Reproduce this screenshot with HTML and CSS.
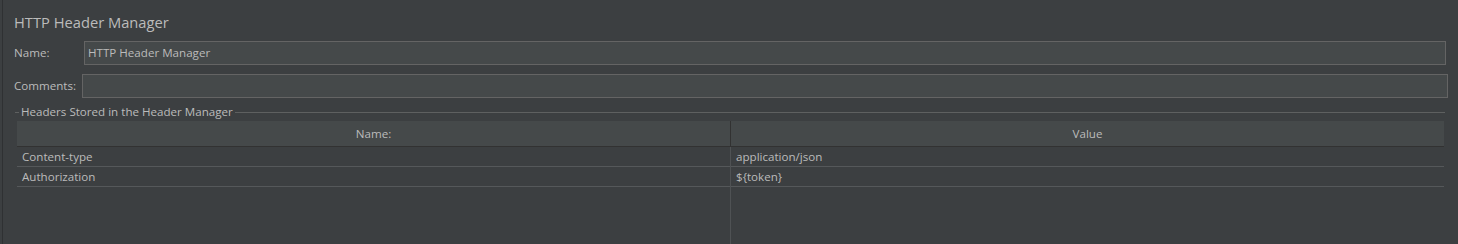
FILE: index.html
```html
<!DOCTYPE html>
<html>
<head>
<meta charset="utf-8">
<link rel="stylesheet" href="styles.css">
</head>
<body>
<div class="panel">
  <div class="title">HTTP Header Manager</div>
  <div class="field field-name">
    <label class="label label-name">Name:</label>
    <div class="input">HTTP Header Manager</div>
  </div>
  <div class="field field-comments">
    <label class="label label-comments">Comments:</label>
    <div class="input"></div>
  </div>
  <div class="group">
    <div class="group-title"><span class="dash"></span><span class="group-text">Headers Stored in the Header Manager</span><span class="group-line"></span></div>
    <div class="table">
      <div class="thead">
        <div class="th th-name">Name:</div>
        <div class="th th-value">Value</div>
      </div>
      <div class="tbody">
        <div class="col col-name">
          <div class="td">Content-type</div>
          <div class="td">Authorization</div>
        </div>
        <div class="col col-value">
          <div class="td">application/json</div>
          <div class="td">${token}</div>
        </div>
      </div>
    </div>
  </div>
</div>
</body>
</html>
```
FILE: styles.css
```css
html, body {
  margin: 0;
  padding: 0;
  background: #3c3f41;
  height: 244px;
  overflow: hidden;
}
body {
  font-family: "Open Sans", "Noto Sans", sans-serif;
  font-size: 11.6px;
  color: #bbbbbb;
}
.panel {
  margin-left: 2px;
  border-left: 1px solid #2f3133;
  height: 244px;
  box-sizing: border-box;
  padding-left: 11px;
}
.title {
  font-size: 14.7px;
  height: 41px;
  line-height: 20px;
  padding-top: 12px;
  box-sizing: border-box;
  color: #bbbbbb;
}
.field {
  display: flex;
  align-items: center;
}
.field-name {
  height: 24px;
  margin-right: 12px;
}
.field-comments {
  margin-top: 9px;
  height: 24px;
  margin-right: 10px;
}
.label {
  flex: none;
  line-height: 24px;
}
.label-name { width: 70px; }
.label-comments { width: 68px; }
.input {
  flex: 1;
  height: 24px;
  box-sizing: border-box;
  border: 1px solid #646464;
  background: #45494a;
  line-height: 22px;
  padding-left: 3px;
  color: #bbbbbb;
}
.group {
  margin-top: 6px;
  margin-left: 1px;
  margin-right: 13px;
}
.group-title {
  display: flex;
  align-items: center;
  height: 16px;
}
.dash {
  width: 4px;
  height: 1px;
  background: #5e6060;
  flex: none;
}
.group-text {
  padding: 0 2px 0 2px;
  flex: none;
  line-height: 16px;
}
.group-line {
  flex: 1;
  height: 1px;
  background: #5e6060;
}
.table {
  margin-top: 1px;
  margin-left: 2px;
  margin-right: 1px;
}
.thead {
  display: flex;
  height: 26px;
  background: #45494a;
  border-bottom: 1px solid #323232;
  box-sizing: border-box;
}
.th {
  text-align: center;
  line-height: 25px;
}
.th-name {
  width: 713px;
  border-right: 1px solid #323232;
  flex: none;
}
.th-value { flex: 1; }
.tbody {
  display: flex;
  height: 97px;
}
.col-name {
  width: 713px;
  flex: none;
  border-right: 1px solid #4f5254;
}
.col-value { flex: 1; }
.td {
  height: 20px;
  line-height: 19px;
  border-bottom: 1px solid #55585a;
  box-sizing: border-box;
  padding-left: 5px;
}
```
